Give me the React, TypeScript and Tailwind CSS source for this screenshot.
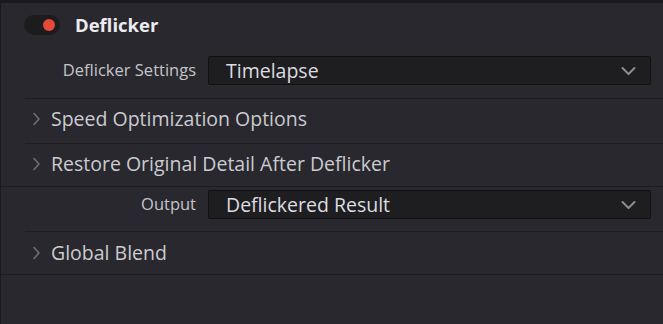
const font = { fontFamily: '"Open Sans", "Noto Sans", sans-serif' };

const ChevronRight = () => (
  <svg width="9" height="14" viewBox="0 0 9 14" className="shrink-0">
    <path d="M2 1.5 L7 7 L2 12.5" fill="none" stroke="#6f6f75" strokeWidth="1.6" strokeLinecap="round" strokeLinejoin="round" />
  </svg>
);

const ChevronDown = () => (
  <svg width="15" height="10" viewBox="0 0 15 10">
    <path d="M1.5 2 L7.5 8 L13.5 2" fill="none" stroke="#8c8c92" strokeWidth="2" strokeLinecap="round" strokeLinejoin="round" />
  </svg>
);

const Divider = ({ full }: { full?: boolean }) => (
  <div className={full ? "h-px bg-[#1d1d21]" : "h-px bg-[#1d1d21] ml-[24px]"} />
);

const Field = ({ label, value }: { label: string; value: string }) => (
  <div className="flex items-center">
    <div className="w-[195px] text-right text-[16.5px] text-[#c4c4c9] leading-none">{label}</div>
    <div className="ml-[12px] w-[443px] h-[29px] flex items-center justify-between rounded-[2px] border border-[#111113] bg-[#1e1e20] pl-[17px] pr-[14px]">
      <span className="text-[19.5px] text-[#dcdce0] leading-none">{value}</span>
      <ChevronDown />
    </div>
  </div>
);

const Section = ({ title, className }: { title: string; className: string }) => (
  <div className={`flex items-center pl-[31px] gap-[10px] ${className}`}>
    <ChevronRight />
    <span className="text-[19.5px] text-[#cbcbd0] leading-none">{title}</span>
  </div>
);

export default function App() {
  return (
    <div className="w-[663px] h-[324px] overflow-hidden bg-[#28282e] border-t-[3px] border-l border-[#1a1a1e]" style={font}>
      {/* header */}
      <div className="flex items-center pl-[23px] pt-[12px]">
        <div className="w-[36px] h-[20px] rounded-full bg-[#1c1c1f] flex items-center justify-end pr-[5px]">
          <span className="w-[12px] h-[12px] rounded-full bg-[#e5493a]" />
        </div>
        <span className="ml-[15px] text-[18.5px] font-bold text-[#ececf0] leading-none">Deflicker</span>
      </div>

      <div className="pt-[21px] pb-[13px]">
        <Field label="Deflicker Settings" value="Timelapse" />
      </div>
      <Divider />
      <Section title="Speed Optimization Options" className="h-[44px] pb-[4px]" />
      <Divider />
      <Section title="Restore Original Detail After Deflicker" className="h-[42px] pb-[2px]" />
      <Divider full />

      <div className="pt-[3px] pb-[12px]">
        <Field label="Output" value="Deflickered Result" />
      </div>
      <Divider />
      <Section title="Global Blend" className="h-[42px] pb-[1px]" />
      <Divider full />
    </div>
  );
}
